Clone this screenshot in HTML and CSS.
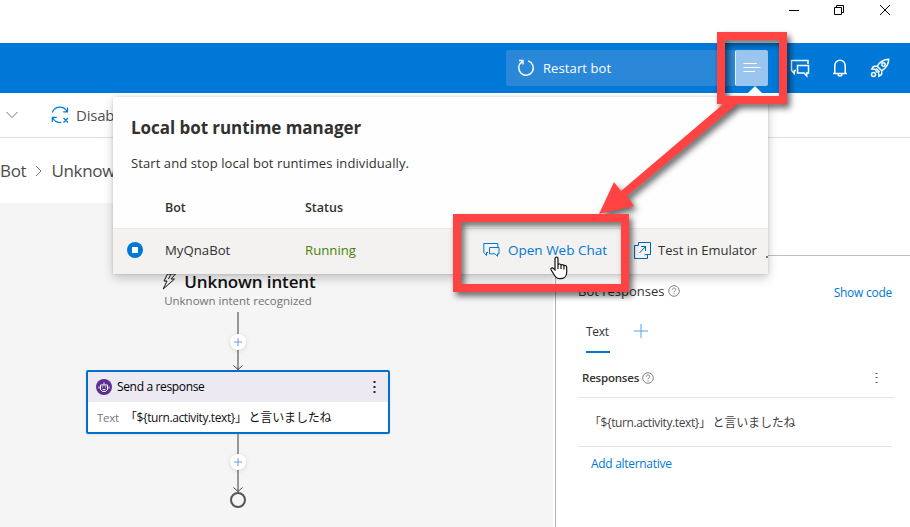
FILE: index.html
```html
<!DOCTYPE html>
<html lang="ja">
<head>
<meta charset="utf-8">
<title>Bot Composer</title>
<link rel="stylesheet" href="styles.css">
</head>
<body>
<div class="window">
  <div class="titlebar">
    <svg class="win-icon" viewBox="0 0 12 12"><path d="M1 6.500h10"/></svg>
    <svg class="win-icon" viewBox="0 0 12 12"><path d="M1.5 3.5h7v7h-7zM3.5 3.5v-2h7v7h-2"/></svg>
    <svg class="win-icon" viewBox="0 0 12 12"><path d="M1 1l10 10M11 1L1 11"/></svg>
  </div>

  <header class="header">
    <button class="restart">
      <svg class="restart-icon" viewBox="0 0 18 18"><path d="M11.2 1.9A7.3 7.3 0 1 1 5 2.8M2 1.500h4v4"/></svg>
      <span class="restart-label">Restart bot</span>
    </button>
    <button class="manager">
      <svg viewBox="0 0 18 12"><path d="M.5 1.5H14M.5 5.5h17M.5 9.5H12"/></svg>
    </button>
    <nav class="header-icons">
      <svg viewBox="0 0 20 20"><path d="M6 12.500H4.300v3L1.500 12.500V2.500h16.500v3.500M7.500 7.500h11v7.500h-1.800v2.800L14 15H7.500z"/></svg>
      <svg viewBox="0 0 20 20"><path d="M3 15.500h14M4.800 15.500V7.500a5.200 5.200 0 0 1 10.400 0v8M8 16a2 2 0 0 0 4 0"/></svg>
      <svg viewBox="0 0 20 20"><path d="M7.200 8.200C10 4 14 1.300 18.700 1.300c0 4.700-2.800 8.700-7 11.500zM7.500 8L3.500 8.500 1.800 11l4 .5M12 12.500l-.5 4L9 18.200l-.5-4M6 10.500l3.500 3.500M5.500 12.500l2 2"/><circle cx="13.500" cy="6.500" r="1.700"/><circle cx="3.500" cy="16.500" r="2"/></svg>
    </nav>
  </header>

  <div class="toolbar">
    <svg class="chevron-down" viewBox="0 0 12 8"><path d="M.5 1l5.500 5.500L11.500 1"/></svg>
    <svg class="sync" viewBox="0 0 18 18"><path d="M1.300 6.500A8 8 0 0 1 15.800 5.200M16.500 1.500v4.300h-4.300M1.300 16v-4.600h4.500M1.800 11.800A8 8 0 0 0 10.500 16.300M12.500 12l4.500 4.500M17 12l-4.500 4.500"/></svg>
    <span class="toolbar-label">Disab</span>
  </div>

  <div class="breadcrumb">
    <span>Bot</span>
    <svg viewBox="0 0 7 12"><path d="M1 1l5 5-5 5"/></svg>
    <span>Unknow</span>
  </div>

  <main class="main">
    <section class="canvas">
      <div class="flow">
        <div class="trigger">
          <svg viewBox="0 0 15 17"><path d="M5.500 1L2 8h3L1.200 16 12.500 6H9l4.500-5zM9 1L6.500 6"/></svg>
          <span class="trigger-title">Unknown intent</span>
        </div>
        <div class="trigger-sub">Unknown intent recognized</div>
        <div class="link link-a"><span class="plus"><svg viewBox="0 0 8 8"><path d="M4 0v8M0 4h8"/></svg></span><svg class="tip" viewBox="0 0 10 5"><path d="M.5.500L5 4.500 9.500.500"/></svg></div>
        <div class="node">
          <div class="node-head">
            <span class="bot-badge"><svg viewBox="0 0 16 16"><path d="M4.500 6h7v4.500l-2 2h-3l-2-2zM8 6V3.500M3 7.500v2M13 7.500v2M6.500 7.500v1M9.500 7.500v1M6.500 10.500h3"/></svg></span>
            <span class="node-title">Send a response</span>
            <svg class="dots" viewBox="0 0 3 12"><path d="M.5 0h2v2h-2zM.5 5h2v2h-2zM.5 10h2v2h-2z"/></svg>
          </div>
          <div class="node-body">
            <span class="node-key">Text</span>
            <span class="expr"><span class="expr-code">「${turn.activity.text}」</span><span class="expr-ja">と言いましたね</span></span>
          </div>
        </div>
        <div class="link link-b"><span class="plus"><svg viewBox="0 0 8 8"><path d="M4 0v8M0 4h8"/></svg></span><svg class="tip" viewBox="0 0 10 5"><path d="M.5.500L5 4.500 9.500.500"/></svg></div>
        <div class="end"></div>
      </div>
    </section>

    <aside class="panel">
      <div class="panel-title">
        <span class="bot-responses">Bot responses</span>
        <svg class="help" viewBox="0 0 12 12"><circle cx="6" cy="6" r="5.300"/><path d="M4.300 4.700c.1-2.200 3.500-2.100 3.400 0C7.600 5.900 6 5.800 6 7.300M6 8.300v1.100"/></svg>
        <a class="show-code">Show code</a>
      </div>
      <div class="tabs">
        <span class="tab">Text</span>
        <svg class="add" viewBox="0 0 14 14"><path d="M7 0v14M0 7h14"/></svg>
      </div>
      <div class="responses-head">
        <span class="responses-label">Responses</span>
        <svg class="help" viewBox="0 0 12 12"><circle cx="6" cy="6" r="5.300"/><path d="M4.300 4.700c.1-2.200 3.500-2.100 3.400 0C7.600 5.900 6 5.800 6 7.300M6 8.300v1.100"/></svg>
        <svg class="dots dots-light" viewBox="0 0 3 12"><path d="M.5 1h2v1h-2zM.5 5h2v1h-2zM.5 10h2v1h-2z"/></svg>
      </div>
      <div class="response"><span class="expr"><span class="expr-code">「${turn.activity.text}」</span><span class="expr-ja">と言いましたね</span></span></div>
      <a class="add-alt">Add alternative</a>
    </aside>
  </main>
</div>

<section class="popup">
  <h1 class="popup-title">Local bot runtime manager</h1>
  <p class="popup-text">Start and stop local bot runtimes individually.</p>
  <div class="popup-cols"><span class="col-bot">Bot</span><span class="col-status">Status</span></div>
  <div class="popup-row">
    <svg class="stop" viewBox="0 0 16 16"><circle cx="8" cy="8" r="8"/><path d="M5 5h6v6H5z"/></svg>
    <span class="bot-name">MyQnaBot</span>
    <span class="running">Running</span>
    <svg class="chat-icon" viewBox="0 0 18 16"><path d="M5 10.500H3.500v3L.8 10.500V1.500h14v3.500M6.500 5.500h9.500v6.300h-1.500v2.500L12 11.800H6.500z"/></svg>
    <a class="open-chat">Open Web Chat</a>
    <svg class="emu-icon" viewBox="0 0 17 17"><path d="M4.500 3.500v-3h12v12h-3M4.500 3.500h-4v13h13v-4l-3 .2M5.500 11l6-6.500M7 4.500h4.500V9"/></svg>
    <span class="emulator">Test in Emulator</span>
  </div>
</section>

<svg class="callouts" viewBox="0 0 910 527">
  <path class="pointer-tip" d="M744 97l11-11 11 11z"/>
  <path class="resize-grip" d="M766 256h2v2h-2z"/>
  <g class="marks">
    <path class="box" d="M721 36h62v64h-62zM457 218h168v70H457z"/>
    <path class="arrow" d="M728 100h14L627 196l7 10-35 8 15-32 7 9z"/>
  </g>
</svg>
<svg class="cursor" viewBox="0 0 18 24"><path d="M5 14V2.800C5 .6 8 .6 8 2.800V9c.2-1.500 2.800-1.300 3 .3.5-1.200 2.800-.9 3 .7.500-1 2.700-.6 2.700 1.200v5c0 4-2.700 6.500-6.700 6.500-3.500 0-5-2-6.500-5L1.200 14c-1-2 1.300-2.800 2.300-1.300zM8 9v4M11 9.500V13M14 10v3.500"/></svg>
</body>
</html>
```
FILE: styles.css
```css
* { box-sizing: border-box; }
body {
  margin: 0;
  width: 910px;
  height: 527px;
  overflow: hidden;
  position: relative;
  background: #fff;
  color: #323130;
  font-family: "Open Sans", "Noto Sans CJK JP", sans-serif;
  font-size: 13px;
}
svg { display: block; flex: none; fill: none; stroke: currentColor; }
span, a { white-space: nowrap; }
button { border: 0; padding: 0; font: inherit; }

.window { display: flex; flex-direction: column; height: 527px; }
.titlebar { height: 43px; flex: none; display: flex; justify-content: flex-end; gap: 33px; padding: 4px 19px 0 0; color: #000; }
.win-icon { width: 12px; height: 12px; }
.win-icon:nth-child(-n+2) { margin-left: -1px; margin-right: 1px; }

.header { height: 50px; flex: none; background: #0078d7; color: #fff; display: flex; align-items: center; padding-left: 506px; }
.restart { width: 229px; height: 36px; background: #2b88d8; border-radius: 2px 0 0 2px; color: #fff; display: flex; align-items: center; gap: 8px; padding-left: 11px; }
.restart-icon { width: 18px; height: 18px; stroke-width: 1.4; }
.restart-label { font-size: 13px; font-weight: 500; letter-spacing: .1px; }
.manager { width: 33px; height: 36px; background: #99c5ee; color: #fff; border-radius: 2px; border-left: 1px solid #e6f1fb; display: flex; align-items: center; justify-content: center; }
.manager svg { width: 18px; height: 12px; }
.header-icons { display: flex; gap: 20px; margin-left: 22px; }
.header-icons svg { width: 20px; height: 20px; stroke-width: 1.5; }

.toolbar { height: 45px; flex: none; border-bottom: 1px solid #e1dfdd; display: flex; align-items: center; padding-left: 6px; }
.chevron-down { width: 12px; height: 8px; color: #797775; }
.sync { width: 18px; height: 18px; margin-left: 33px; color: #0078d4; stroke-width: 1.2; }
.toolbar-label { margin-left: 7px; font-size: 15px; letter-spacing: -.2px; color: #505050; }
.breadcrumb { height: 65px; flex: none; display: flex; align-items: center; font-size: 17px; letter-spacing: -.3px; color: #4d4c4b; gap: 9px; }
.breadcrumb svg { width: 7px; height: 12px; color: #797775; }

.main { flex: 1; display: flex; }
.canvas { width: 553px; background: #f5f5f5; }
.flow { width: 304px; margin-left: 86px; padding-top: 67px; display: flex; flex-direction: column; align-items: center; }
.trigger { height: 22px; display: flex; align-items: center; gap: 7px; margin-left: 2px; color: #111; }
.trigger svg { width: 15px; height: 17px; }
.trigger-title { font-size: 17px; font-weight: 600; letter-spacing: -.12px; }
.trigger-sub { height: 20px; line-height: 18px; font-size: 11.500px; color: #727170; white-space: nowrap; }
.link { width: 26px; display: flex; flex-direction: column; align-items: center; background: linear-gradient(#979797, #979797) center / 2px 100% no-repeat; }
.link-a { height: 58px; padding-top: 22px; }
.link-b { height: 58px; padding-top: 20px; }
.plus { width: 16px; height: 16px; border-radius: 50%; background: #fff; box-shadow: 0 1px 4px #0002; color: #6b9cf0; display: flex; align-items: center; justify-content: center; }
.plus svg { width: 8px; height: 8px; }
.tip { width: 10px; height: 5px; margin-top: auto; color: #444; }
.node { width: 304px; height: 64px; border: 2px solid #0070cb; border-radius: 2px; background: #fff; box-shadow: 0 1px 3px #0001; }
.node-head { height: 30px; background: #ece9f3; display: flex; align-items: center; padding: 0 12px 0 8px; color: #000; }
.bot-badge { width: 16px; height: 16px; border-radius: 50%; background: #5c2d91; color: #fff; }
.bot-badge svg { width: 16px; height: 16px; }
.node-title { margin: -2px 0 0 5px; font-size: 12px; letter-spacing: -.35px; }
.dots { width: 3px; height: 12px; margin-left: auto; fill: #222; stroke: none; }
.dots-light { fill: #555; }
.node-body { height: 30px; display: flex; align-items: center; padding-left: 9px; color: #111; }
.node-key { width: 28px; font-size: 11.500px; letter-spacing: -.3px; color: #797775; }
.expr { font-size: 12px; display: flex; align-items: center; }
.expr-code { letter-spacing: -.4px; }
.expr-ja { margin-left: 2px; letter-spacing: -.15px; }
.end { width: 16px; height: 16px; border: 2px solid #555; border-radius: 50%; }

.panel { width: 355px; height: 272px; margin: 52px 0 0 2px; border-left: 1px solid #b3b0ad; border-top: 1px solid #c0bebc; padding-left: 22px; display: flex; flex-direction: column; }
.panel-title { height: 54px; padding: 17px 18px 0 0; display: flex; align-items: center; }
.bot-responses { font-size: 13px; margin-top: -2px; }
.help { width: 12px; height: 12px; color: #797775; stroke-width: .9; margin-left: 3px; }
.panel-title .help { margin: -2px 0 0 4px; }
.show-code { margin: 2px 0 0 auto; font-size: 12px; letter-spacing: -.25px; color: #0078d4; }
.tabs { height: 43px; display: flex; padding-left: 8px; }
.tab { width: 24px; height: 43px; line-height: 43px; font-size: 12px; border-bottom: 2px solid #0078d4; letter-spacing: -.3px; }
.add { width: 14px; height: 14px; margin: 14px 0 0 24px; color: #50a5e8; }
.responses-head { height: 45px; width: 317px; border-bottom: 1px solid #e5e5e5; display: flex; align-items: center; padding: 5px 17px 0 4px; }
.responses-label { font-size: 11.500px; font-weight: 600; letter-spacing: -.2px; }
.response { width: 314px; height: 49px; border-bottom: 1px solid #e5e5e5; display: flex; align-items: center; padding-left: 11px; color: #444; }
.add-alt { margin: 8px 0 0 13px; font-size: 12px; letter-spacing: -.3px; color: #0078d4; }

.popup { position: absolute; left: 113px; top: 97px; width: 655px; height: 177px; background: #fefefe; box-shadow: 0 4px 10px #0003, 0 0 3px #0002; }
.popup-title { margin: 0; padding: 19px 0 0 18px; height: 55px; line-height: 24px; font-size: 17px; font-weight: 700; letter-spacing: -.05px; }
.popup-text { margin: 0; padding-left: 18px; line-height: 22px; font-size: 13px; letter-spacing: .09px; }
.popup-cols { height: 54px; display: flex; align-items: center; padding: 12px 0 0 52px; font-size: 12.500px; font-weight: 600; }
.col-bot { width: 140px; }
.popup-row { height: 46px; background: #f3f2f1; border-top: 1px solid #eae9e8; display: flex; align-items: center; padding: 0 0 3px 14px; }
.stop { width: 16px; height: 16px; stroke: none; }
.stop circle { fill: #0078d7; }
.stop path { fill: #fff; }
.bot-name { width: 140px; margin-left: 22px; font-size: 13.200px; }
.running { width: 178px; color: #498205; font-size: 13.200px; }
.chat-icon { width: 18px; height: 16px; color: #0078d4; }
.open-chat { width: 126px; margin-left: 7px; font-size: 13.500px; color: #0078d4; }
.emu-icon { width: 17px; height: 17px; color: #0063b1; }
.emulator { margin-left: 7px; font-size: 13px; }

.callouts { position: absolute; left: 0; top: 0; width: 910px; height: 527px; }
.pointer-tip { fill: #fff; stroke: none; }
.resize-grip { fill: #777; stroke: none; }
.marks { filter: drop-shadow(3px 4px 3px #0009); }
.box { stroke: #ff4343; stroke-width: 8; }
.arrow { fill: #ff4343; stroke: none; }
.cursor { position: absolute; left: 550px; top: 256px; width: 18px; height: 24px; color: #111; }
.cursor path { fill: #fff; stroke-width: 1.200; }
```
